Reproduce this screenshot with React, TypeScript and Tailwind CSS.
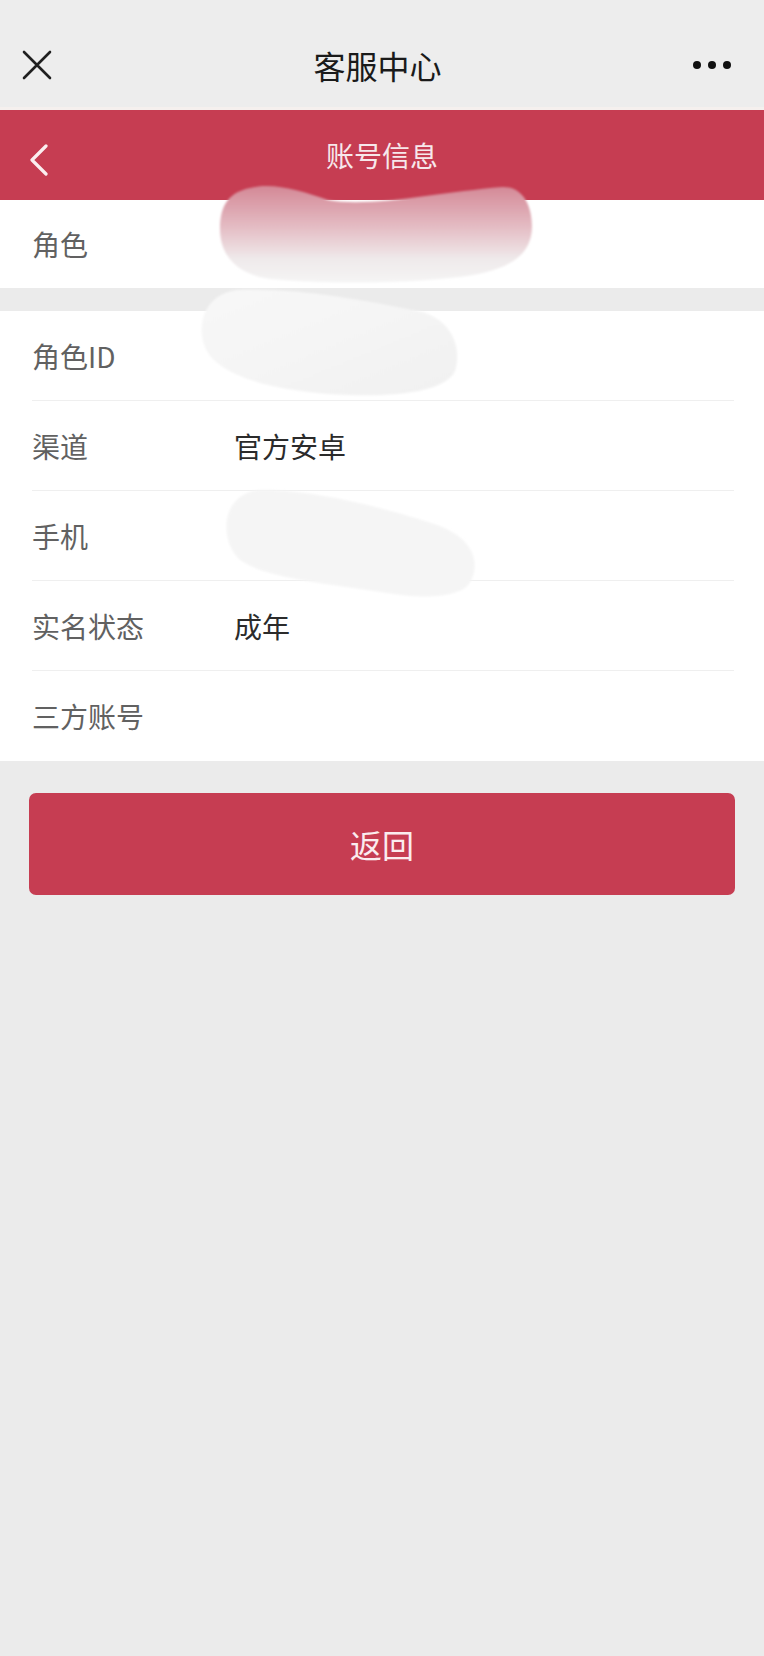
import React from 'react';

type Row = {
	label: string;
	value?: string;
}

const rows: Row[] = [
	{ label: '角色ID' },
	{ label: '渠道', value: '官方安卓' },
	{ label: '手机' },
	{ label: '实名状态', value: '成年' },
	{ label: '三方账号' },
]

const font = "font-['Noto_Sans_CJK_SC','Noto_Sans',sans-serif]";

// redaction smudges laid over the values
function Smudges() {
	return (
		<>
			<svg className="absolute left-[218px] top-[182px]" width="316" height="104" viewBox="-2 -2 316 104">
				<defs>
					<linearGradient id="sm1" x1="0" y1="0" x2="0" y2="1">
						<stop offset="0" stopColor="#d48896" />
						<stop offset="0.4" stopColor="#e3b9c1" />
						<stop offset="0.75" stopColor="#efe9ea" />
						<stop offset="1" stopColor="#f5f5f5" />
					</linearGradient>
					<filter id="bl" x="-10%" y="-10%" width="120%" height="120%">
						<feGaussianBlur stdDeviation="1.2" />
					</filter>
				</defs>
				<path filter="url(#bl)" fill="url(#sm1)" d="M30 4 C52 -2 80 6 108 16 C150 24 220 8 282 3 C305 2 312 25 312 42 C312 70 292 86 240 93 C180 100 100 100 50 95 C15 90 0 70 0 45 C0 20 10 8 30 4 Z" />
			</svg>
			<svg className="absolute left-[195px] top-[286px]" width="266" height="114" viewBox="-3 -3 266 114">
				<defs>
					<linearGradient id="sm2" x1="0" y1="0" x2="1" y2="1">
						<stop offset="0" stopColor="#f8f8f8" />
						<stop offset="1" stopColor="#f1f1f1" />
					</linearGradient>
				</defs>
				<path filter="url(#bl)" fill="url(#sm2)" d="M40 1 C100 -1 160 10 220 22 C255 30 264 60 257 82 C248 102 200 108 150 106 C100 104 40 95 15 70 C-5 50 0 5 40 1 Z" />
			</svg>
			<svg className="absolute left-[221px] top-[486px]" width="262" height="114" viewBox="-3 -3 262 114">
				<path filter="url(#bl)" fill="#f5f5f5" d="M35 1 C80 0 150 15 210 35 C250 48 258 75 245 95 C235 108 200 110 170 105 C110 95 40 90 15 70 C-5 50 -3 5 35 1 Z" />
			</svg>
		</>
	)
}

export default function App() {
	return (
		<div className={`relative min-h-[1656px] w-full bg-[#ebebeb] ${font}`}>
			{/* wechat title bar */}
			<div className="flex h-[110px] items-center justify-between border-b-[3px] border-[#f5f0ee] bg-[#ededed] pl-[22px] pr-[33px] pt-[22px]">
				<svg width="30" height="30" viewBox="0 0 30 30" fill="none" stroke="#1f1f1f" strokeWidth="2.6" strokeLinecap="round">
					<path d="M2 2 L28 28 M28 2 L2 28" />
				</svg>
				<div className="ml-[10px] text-[32px] font-normal text-[#1a1a1a]">客服中心</div>
				<div className="flex items-center gap-[7px]">
					<span className="h-[8px] w-[8px] rounded-full bg-[#111]"></span>
					<span className="h-[8px] w-[8px] rounded-full bg-[#111]"></span>
					<span className="h-[8px] w-[8px] rounded-full bg-[#111]"></span>
				</div>
			</div>

			{/* page header */}
			<div className="relative flex h-[90px] items-center justify-center bg-[#c63d52]">
				<svg className="absolute left-[28px] top-[34px]" width="22" height="32" viewBox="0 0 22 32" fill="none" stroke="#fbeef0" strokeWidth="3.2" strokeLinecap="round" strokeLinejoin="round">
					<path d="M18 2 L4 16 L18 30" />
				</svg>
				<div className="text-[28px] text-[#f7e8eb]">账号信息</div>
			</div>

			<div className="flex h-[88px] items-center bg-white px-[32px]">
				<span className="text-[28px] text-[#616161]">角色</span>
			</div>

			<div className="mt-[23px] bg-white pl-[32px] pr-[30px]">
				{rows.map((row, index) => (
					<div key={row.label} className={`flex h-[90px] items-center ${index < rows.length - 1 ? 'border-b border-[#efefef]' : ''}`}>
						<span className="w-[202px] text-[28px] text-[#616161]">{row.label}</span>
						<span className="text-[28px] text-[#2b2b2b]">{row.value}</span>
					</div>
				))}
			</div>

			<div className="px-[29px] pt-[32px]">
				<button className="flex h-[102px] w-full items-center justify-center rounded-[7px] bg-[#c63d52] text-[32px] text-[#fbecef]">返回</button>
			</div>

			<Smudges />
		</div>
	)
}
